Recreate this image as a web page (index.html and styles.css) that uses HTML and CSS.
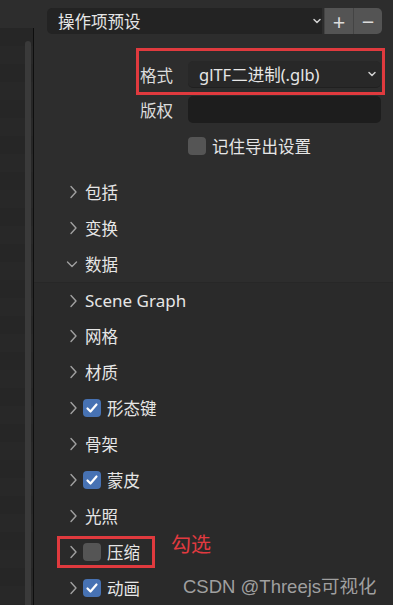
FILE: index.html
```html
<!DOCTYPE html>
<html lang="zh">
<head>
<meta charset="utf-8">
<link rel="stylesheet" href="styles.css">
</head>
<body>
<div class="app">
  <div class="side">
    <div class="side-body"><div class="scrollbar"></div></div>
  </div>
  <div class="main">
    <div class="preset">
      <div class="preset-select">
        <span>操作项预设</span>
        <svg class="chev" width="10" height="8" viewBox="0 0 10 8"><path d="M2 2.5 L5 5.5 L8 2.5" fill="none" stroke="#d0d0d0" stroke-width="1.5" stroke-linecap="round" stroke-linejoin="round"/></svg>
      </div>
      <div class="pbtn">+</div>
      <div class="pbtn last">−</div>
    </div>

    <div class="form">
      <div class="label">格式</div>
      <div class="select">
        <span>glTF二进制(.glb)</span>
        <svg class="chev" width="10" height="8" viewBox="0 0 10 8"><path d="M2 2.5 L5 5.5 L8 2.5" fill="none" stroke="#d0d0d0" stroke-width="1.5" stroke-linecap="round" stroke-linejoin="round"/></svg>
      </div>
      <div class="label">版权</div>
      <div class="input"></div>
      <div></div>
      <div class="check-row"><span class="cb"></span><span>记住导出设置</span></div>
      <div class="redbox format-box"></div>
    </div>

    <div class="tree">
      <div class="row"><span class="arrow"><svg width="17" height="14" viewBox="0 0 17 14"><path d="M5 1.5 L10 7 L5 12.5" fill="none" stroke="#a0a0a0" stroke-width="1.4" stroke-linecap="round" stroke-linejoin="round"/></svg></span><span class="txt">包括</span></div>
      <div class="row"><span class="arrow"><svg width="17" height="14" viewBox="0 0 17 14"><path d="M5 1.5 L10 7 L5 12.5" fill="none" stroke="#a0a0a0" stroke-width="1.4" stroke-linecap="round" stroke-linejoin="round"/></svg></span><span class="txt">变换</span></div>
      <div class="row"><span class="arrow"><svg width="17" height="14" viewBox="0 0 17 14"><path d="M1.5 5 L6 9.5 L10.5 5" fill="none" stroke="#a0a0a0" stroke-width="1.4" stroke-linecap="round" stroke-linejoin="round"/></svg></span><span class="txt">数据</span></div>
      <div class="sub">
        <div class="row"><span class="arrow"><svg width="17" height="14" viewBox="0 0 17 14"><path d="M5 1.5 L10 7 L5 12.5" fill="none" stroke="#a0a0a0" stroke-width="1.4" stroke-linecap="round" stroke-linejoin="round"/></svg></span><span class="txt latin">Scene Graph</span></div>
        <div class="row"><span class="arrow"><svg width="17" height="14" viewBox="0 0 17 14"><path d="M5 1.5 L10 7 L5 12.5" fill="none" stroke="#a0a0a0" stroke-width="1.4" stroke-linecap="round" stroke-linejoin="round"/></svg></span><span class="txt">网格</span></div>
        <div class="row"><span class="arrow"><svg width="17" height="14" viewBox="0 0 17 14"><path d="M5 1.5 L10 7 L5 12.5" fill="none" stroke="#a0a0a0" stroke-width="1.4" stroke-linecap="round" stroke-linejoin="round"/></svg></span><span class="txt">材质</span></div>
        <div class="row"><span class="arrow"><svg width="17" height="14" viewBox="0 0 17 14"><path d="M5 1.5 L10 7 L5 12.5" fill="none" stroke="#a0a0a0" stroke-width="1.4" stroke-linecap="round" stroke-linejoin="round"/></svg></span><span class="cb on"><svg width="18" height="18" viewBox="0 0 18 18"><path d="M4.5 9.5 L7.5 12.5 L13.5 5.5" fill="none" stroke="#fff" stroke-width="2.2" stroke-linecap="round" stroke-linejoin="round"/></svg></span><span class="txt">形态键</span></div>
        <div class="row"><span class="arrow"><svg width="17" height="14" viewBox="0 0 17 14"><path d="M5 1.5 L10 7 L5 12.5" fill="none" stroke="#a0a0a0" stroke-width="1.4" stroke-linecap="round" stroke-linejoin="round"/></svg></span><span class="txt">骨架</span></div>
        <div class="row"><span class="arrow"><svg width="17" height="14" viewBox="0 0 17 14"><path d="M5 1.5 L10 7 L5 12.5" fill="none" stroke="#a0a0a0" stroke-width="1.4" stroke-linecap="round" stroke-linejoin="round"/></svg></span><span class="cb on"><svg width="18" height="18" viewBox="0 0 18 18"><path d="M4.5 9.5 L7.5 12.5 L13.5 5.5" fill="none" stroke="#fff" stroke-width="2.2" stroke-linecap="round" stroke-linejoin="round"/></svg></span><span class="txt">蒙皮</span></div>
        <div class="row"><span class="arrow"><svg width="17" height="14" viewBox="0 0 17 14"><path d="M5 1.5 L10 7 L5 12.5" fill="none" stroke="#a0a0a0" stroke-width="1.4" stroke-linecap="round" stroke-linejoin="round"/></svg></span><span class="txt">光照</span></div>
        <div class="row"><span class="arrow"><svg width="17" height="14" viewBox="0 0 17 14"><path d="M5 1.5 L10 7 L5 12.5" fill="none" stroke="#a0a0a0" stroke-width="1.4" stroke-linecap="round" stroke-linejoin="round"/></svg></span><span class="cb"></span><span class="txt">压缩</span>
          <div class="redbox comp-box"></div>
          <div class="note">勾选</div>
        </div>
        <div class="row"><span class="arrow"><svg width="17" height="14" viewBox="0 0 17 14"><path d="M5 1.5 L10 7 L5 12.5" fill="none" stroke="#a0a0a0" stroke-width="1.4" stroke-linecap="round" stroke-linejoin="round"/></svg></span><span class="cb on"><svg width="18" height="18" viewBox="0 0 18 18"><path d="M4.5 9.5 L7.5 12.5 L13.5 5.5" fill="none" stroke="#fff" stroke-width="2.2" stroke-linecap="round" stroke-linejoin="round"/></svg></span><span class="txt">动画</span></div>
      </div>
    </div>
  </div>
</div>
<div class="watermark">CSDN @Threejs可视化</div>
</body>
</html>
```

FILE: styles.css
```css
* { box-sizing: border-box; }
html, body {
  margin: 0;
  padding: 0;
  width: 393px;
  height: 605px;
  overflow: hidden;
  background: #2d2d2d;
  font-family: "Noto Sans", "Noto Sans CJK SC", sans-serif;
  color: #e6e6e6;
}
.app {
  display: flex;
  height: 605px;
}
.side {
  width: 34px;
  flex: none;
  padding-top: 28px;
  display: flex;
  flex-direction: column;
}
.side-body {
  flex: 1;
  background: repeating-linear-gradient(180deg, #262626 0 18px, #282828 18px 36px);
  border-right: 1px solid #0e0e0e;
  display: flex;
  justify-content: flex-end;
  padding: 13px 2px 0 0;
}
.scrollbar {
  width: 6px;
  background: #3a3a3a;
  border-radius: 3px 3px 0 0;
}
.main {
  flex: 1;
  padding: 8px 11px 0 13px;
  position: relative;
}
.preset {
  display: flex;
  height: 26px;
}
.preset-select {
  flex: 1;
  display: flex;
  align-items: center;
  justify-content: space-between;
  background: #232323;
  border-radius: 5px 0 0 5px;
  padding: 0 0 0 11px;
  font-size: 16.5px;
  margin-right: 2px;
}
.pbtn {
  width: 29px;
  display: flex;
  align-items: center;
  justify-content: center;
  background: #545454;
  color: #dcdcdc;
  font-size: 22px;
  line-height: 1;
  border-left: 1px solid #444;
}
.pbtn.last { border-radius: 0 5px 5px 0; }
.form {
  position: relative;
  display: grid;
  grid-template-columns: 48px 193px;
  grid-auto-rows: auto;
  row-gap: 8px;
  padding-left: 93px;
  margin-top: 27px;
  align-items: center;
}
.label {
  font-size: 16.5px;
  color: #dcdcdc;
}
.select {
  height: 27px;
  background: #282828;
  border-radius: 5px;
  display: flex;
  align-items: center;
  justify-content: space-between;
  padding: 0 4px 0 11px;
  font-size: 16.5px;
  border-bottom: 1px solid #202020;
}
.input {
  height: 27px;
  background: #1d1d1d;
  border-radius: 5px;
}
.check-row {
  display: flex;
  align-items: center;
  gap: 6px;
  font-size: 16.5px;
  margin-top: 3px;
}
.cb {
  width: 18px;
  height: 18px;
  flex: none;
  background: #555555;
  border-radius: 4px;
  display: inline-flex;
}
.cb.on { background: #4772b3; }
.redbox {
  position: absolute;
  border: 3px solid #e03a3e;
}
.format-box {
  left: 89px;
  top: -13px;
  width: 249px;
  height: 47px;
}
.tree {
  margin-top: 16px;
  margin-left: -13px;
  margin-right: -11px;
}
.sub {
  background: #2a2a2a;
  border-top: 1px solid #272727;
}
.row {
  position: relative;
  height: 36px;
  display: flex;
  align-items: center;
  padding-left: 32px;
  font-size: 16.5px;
}
.sub .row:first-child { height: 35px; }
.arrow {
  width: 17px;
  height: 14px;
  display: inline-flex;
}
.arrow + .txt { margin-left: 2px; }
.cb + .txt { margin-left: 6px; }
.latin { font-size: 17px; }
.comp-box {
  left: 23px;
  top: 2px;
  width: 98px;
  height: 32px;
}
.note {
  position: absolute;
  left: 137px;
  top: -5px;
  color: #e23a40;
  font-size: 20px;
}
.watermark {
  position: absolute;
  left: 183px;
  top: 572px;
  font-family: "Liberation Sans", "Noto Sans CJK SC", sans-serif;
  font-size: 18.5px;
  color: rgba(200, 200, 200, 0.75);
}
```
